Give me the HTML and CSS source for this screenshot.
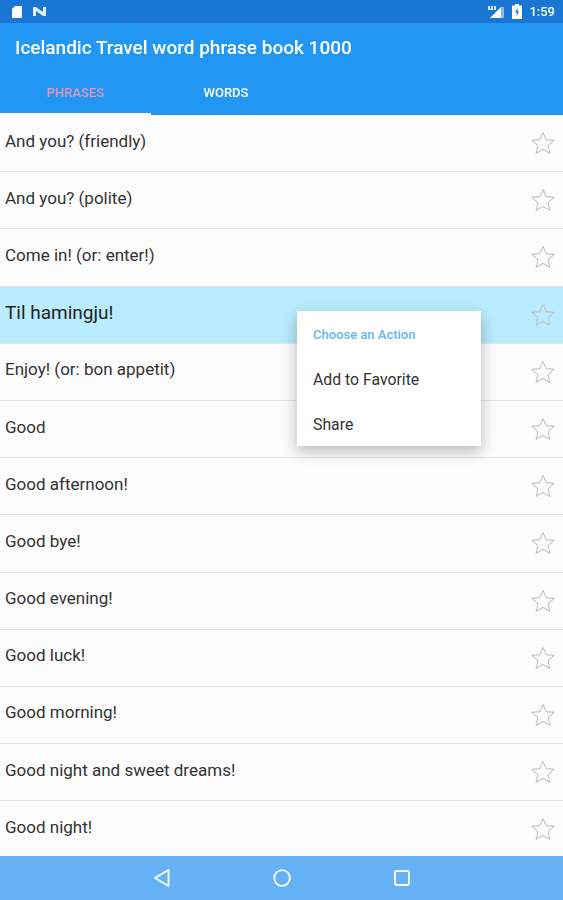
FILE: index.html

```html
<!DOCTYPE html>
<html lang="en">
<head>
    <meta charset="UTF-8">
    <meta name="viewport" content="width=device-width, initial-scale=1.0">
    <title>Icelandic Travel word phrase book 1000</title>
    <link rel="stylesheet" href="styles.css">
</head>
<body>
    <svg class="svg-defs" width="0" height="0">
        <symbol id="star" viewBox="0 0 24 24">
            <path d="M12 1.500l3.200 7.100 7.800.8-5.800 5.200 1.600 7.700-6.800-3.900-6.800 3.900 1.600-7.700L1 9.400l7.800-.8z" fill="none" stroke="#c4c4c4" stroke-width="1.100" stroke-linejoin="round"/>
        </symbol>
    </svg>
    <div class="phone">
        <!-- status bar -->
        <div class="status-bar">
            <div class="status-left">
                <svg width="12" height="14" viewBox="0 0 12 14"><path d="M4 1h7v12H1V4z" fill="#fff"/></svg>
                <svg width="15" height="11" viewBox="0 0 15 11"><path d="M1 1h3l7 5V1h3v9h-3L4 5v5H1z" fill="#e3effb"/></svg>
            </div>
            <div class="status-right">
                <svg width="17" height="14" viewBox="0 0 17 14"><path d="M2 13L13 2v11z" fill="#fff"/><path d="M13 2h3v11h-3z" fill="#8db9e8"/><path d="M0 1h2v3h1V1h2v4H0zM6 1h2v4H6z" fill="#d5e5f6"/></svg>
                <svg class="battery" width="10" height="15" viewBox="0 0 10 15"><path d="M3 0h4v1.500h3V15H0V1.500h3z" fill="#fff"/><path d="M5.500 4L3 8.500h1.800V12L7 7.500H5.500z" fill="#1976d2"/></svg>
                <span class="clock">1:59</span>
            </div>
        </div>

        <!-- app bar and tabs -->
        <header class="app-bar">
            <h1 class="app-title">Icelandic Travel word phrase book 1000</h1>
            <div class="tabs">
                <div class="tab tab-active">PHRASES</div>
                <div class="tab">WORDS</div>
            </div>
        </header>

        <!-- phrase list -->
        <ul class="phrase-list">
            <li class="row"><span class="phrase">And you? (friendly)</span><svg class="star"><use href="#star"/></svg></li>
            <li class="row"><span class="phrase">And you? (polite)</span><svg class="star"><use href="#star"/></svg></li>
            <li class="row"><span class="phrase">Come in! (or: enter!)</span><svg class="star"><use href="#star"/></svg></li>
            <li class="row row-selected"><span class="phrase">Til hamingju!</span><svg class="star"><use href="#star"/></svg></li>
            <li class="row"><span class="phrase">Enjoy! (or: bon appetit)</span><svg class="star"><use href="#star"/></svg></li>
            <li class="row"><span class="phrase">Good</span><svg class="star"><use href="#star"/></svg></li>
            <li class="row"><span class="phrase">Good afternoon!</span><svg class="star"><use href="#star"/></svg></li>
            <li class="row"><span class="phrase">Good bye!</span><svg class="star"><use href="#star"/></svg></li>
            <li class="row"><span class="phrase">Good evening!</span><svg class="star"><use href="#star"/></svg></li>
            <li class="row"><span class="phrase">Good luck!</span><svg class="star"><use href="#star"/></svg></li>
            <li class="row"><span class="phrase">Good morning!</span><svg class="star"><use href="#star"/></svg></li>
            <li class="row"><span class="phrase">Good night and sweet dreams!</span><svg class="star"><use href="#star"/></svg></li>
            <li class="row"><span class="phrase">Good night!</span><svg class="star"><use href="#star"/></svg></li>
        </ul>

        <!-- popup over the list -->
        <div class="action-menu">
            <div class="menu-title">Choose an Action</div>
            <div class="menu-item">Add to Favorite</div>
            <div class="menu-item">Share</div>
        </div>

        <!-- navigation bar -->
        <div class="nav-bar">
            <svg width="18" height="20" viewBox="0 0 18 20"><path d="M15.500 2v16L2 10z" fill="none" stroke="#fff" stroke-width="1.800" stroke-linejoin="round"/></svg>
            <svg width="18" height="18" viewBox="0 0 18 18"><circle cx="9" cy="9" r="7.800" fill="none" stroke="#fff" stroke-width="1.800"/></svg>
            <svg width="18" height="18" viewBox="0 0 18 18"><rect x="2" y="2" width="14" height="14" rx="1.500" fill="none" stroke="#fff" stroke-width="1.800"/></svg>
        </div>
    </div>
</body>
</html>
```

FILE: styles.css

```css
body {
    margin: 0;
    font-family: 'Roboto', sans-serif;
    background-color: #fafafa;
}
.svg-defs {
    position: absolute;
}
/* the reference is a soft, upscaled capture */
.phone {
    position: relative;
    width: 563px;
    height: 900px;
    overflow: hidden;
    display: flex;
    flex-direction: column;
    filter: blur(0.4px);
}
.status-bar {
    height: 23px;
    background-color: #1976d2;
    display: flex;
    justify-content: space-between;
    align-items: center;
    padding: 0 8px 0 11px;
    color: #fff;
}
.status-left, .status-right {
    display: flex;
    align-items: center;
}
.status-left {
    gap: 9px;
}
.status-right {
    gap: 5px;
}
.battery {
    margin-left: 2px;
}
.clock {
    font-size: 13px;
    font-weight: 500;
    margin-left: 2px;
}
.app-bar {
    height: 92px;
    background-color: #2196f3;
    color: #fff;
    display: flex;
    flex-direction: column;
}
.app-title {
    margin: 0;
    padding: 13px 15px 0;
    height: 49px;
    box-sizing: border-box;
    font-size: 19px;
    line-height: 24px;
    font-weight: 500;
}
.tabs {
    display: flex;
    height: 43px;
}
.tab {
    width: 150px;
    text-align: center;
    font-size: 13px;
    font-weight: 500;
    line-height: 42px;
    box-sizing: border-box;
}
.tab-active {
    width: 151px;
    color: #e596b8;
    border-bottom: 2px solid #fff;
}
.phrase-list {
    list-style: none;
    margin: 0;
    padding: 0;
    flex: 1;
    min-height: 0;
    overflow: hidden;
}
.row {
    height: 57.2px;
    box-sizing: border-box;
    display: flex;
    justify-content: space-between;
    align-items: center;
    padding: 0 8px 0 5px;
    border-bottom: 1px solid #e4e4e4;
    background-color: #fcfcfc;
}
.phrase {
    font-size: 17px;
    color: #333;
    margin-bottom: 5px;
}
.star {
    width: 24px;
    height: 24px;
}
.row-selected {
    background-color: #b9ecfe;
}
.row-selected .phrase {
    font-size: 19px;
    color: #222;
}
.action-menu {
    position: absolute;
    left: 297px;
    top: 311px;
    width: 184px;
    height: 135px;
    box-sizing: border-box;
    padding: 1px 0 0 16px;
    background-color: #fff;
    box-shadow: 0 5px 14px rgba(0, 0, 0, 0.28);
}
.menu-title {
    height: 45px;
    line-height: 46px;
    font-size: 13px;
    font-weight: 500;
    color: #64b5f6;
}
.menu-item {
    height: 45px;
    line-height: 45px;
    font-size: 15.8px;
    color: #333;
}
.nav-bar {
    height: 44px;
    flex: none;
    background-color: #64b2f5;
    display: flex;
    justify-content: center;
    align-items: center;
    gap: 102px;
}
```
